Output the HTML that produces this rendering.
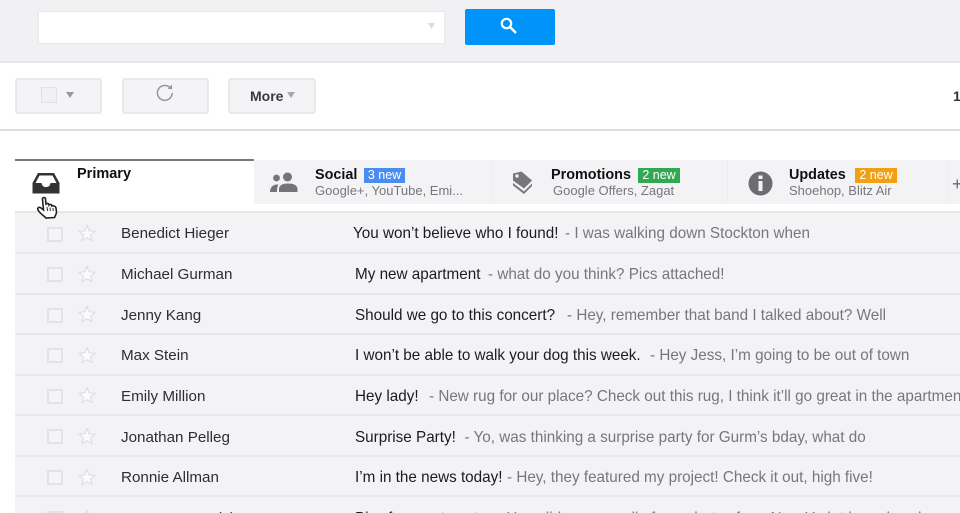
<!DOCTYPE html>
<html><head><meta charset="utf-8">
<style>
html,body{margin:0;padding:0;background:#fff}
#p{position:relative;width:960px;height:513px;overflow:hidden;background:#fff;font-family:"Liberation Sans",sans-serif;filter:blur(.35px)}
#p div,#p svg{position:absolute}
.t{white-space:nowrap;line-height:20px;height:20px}
.btn{background:#f4f4f6;border:2px solid #e9e9eb;border-radius:3px;box-sizing:border-box;top:78px;height:36px;width:87px}
.row{left:15px;width:945px;height:40px;background:#f3f3f6}
.line{left:15px;width:945px;height:2px;background:#e7e7e9}
.cb{left:47px;width:12px;height:11px;border:2px solid #e3e3e5;background:#f5f5f7}
.n{left:121px;font-size:15.2px;color:#2e2e30}
.s{font-size:15.25px;color:#1c1c1e}
.v{font-size:15.25px;color:#77777b}
.tt{font-size:14.4px;font-weight:bold;color:#111;top:165px}
.sub{font-size:13px;color:#77777b;top:181px}
.b{font-size:12.5px;color:#fff;height:15px;line-height:15px;top:168px;text-align:center}
.st{left:78px}
</style></head><body><div id="p">
<div style="left:0;top:0;width:960px;height:62px;background:#f1f1f3"></div>
<div style="left:0;top:61px;width:960px;height:2px;background:#e6e6e8"></div>
<div style="left:38px;top:11px;width:407px;height:33px;background:#fff;border:1px solid #e8e8ea;box-sizing:border-box"></div>
<svg style="left:427px;top:23px" width="9" height="6"><path d="M1 0H8L4.500 6Z" fill="#dcdcde"/></svg>
<div style="left:465px;top:9px;width:90px;height:36px;background:#0094fb;border-radius:2px"></div>
<svg style="left:499px;top:16px" width="20" height="20" viewBox="0 0 20 20"><circle cx="7.500" cy="7.500" r="4.700" fill="none" stroke="#fff" stroke-width="2.200"/><path d="M11 11L17 17" stroke="#fff" stroke-width="2.400"/></svg>

<div class="btn" style="left:15px"></div>
<div style="left:41px;top:87px;width:14px;height:14px;border:1px solid #e2e2e4;background:#f1f1f3"></div>
<svg style="left:66px;top:92px" width="8" height="6"><path d="M0 0H8L4 6Z" fill="#98989c"/></svg>
<div class="btn" style="left:122px"></div>
<svg style="left:154px;top:83px" width="22" height="20" viewBox="0 0 22 20"><path d="M16.500 5.200A7.400 7.400 0 1 0 18.200 10" fill="none" stroke="#97979b" stroke-width="1.500"/><path d="M13.500 5.800L18 6.300V1.500Z" fill="#97979b"/></svg>
<div class="btn" style="left:228px;width:88px"></div>
<div class="t" style="left:250px;top:86px;font-size:14px;font-weight:bold;color:#3a3a3c">More</div>
<svg style="left:287px;top:92px" width="8" height="6"><path d="M0 0H8L4 6Z" fill="#a8a8ac"/></svg>
<div class="t" style="left:953px;top:86px;font-size:14px;font-weight:bold;color:#333">1</div>
<div style="left:0;top:129px;width:960px;height:2px;background:#dedee0"></div>

<div style="left:254px;top:160px;width:706px;height:44px;background:#f3f3f6"></div>
<div style="left:15px;top:159px;width:239px;height:2px;background:#7a7a7c"></div>
<div style="left:491px;top:160px;width:1px;height:44px;background:#eeeef1"></div>
<div style="left:727px;top:160px;width:1px;height:44px;background:#eeeef1"></div>
<div style="left:948px;top:160px;width:1px;height:44px;background:#eeeef1"></div>

<svg style="left:32px;top:172px" width="28" height="22" viewBox="0 0 28 22"><path d="M6 1H22L27.500 11V21.500H.5V11Z" fill="#333335"/><path d="M7.500 3.500H20.500L24.500 11H18.500C18 14 16.500 15 14 15S10 14 9.500 11H3.500Z" fill="#fff"/></svg>
<div class="t" style="left:77px;top:164px;font-size:14.500px;font-weight:bold;color:#111">Primary</div>

<svg style="left:269px;top:172px" width="30" height="22" viewBox="0 0 30 22"><circle cx="7.500" cy="6" r="3.400" fill="#747478"/><circle cx="18.500" cy="5" r="4.500" fill="#747478"/><path d="M1 20C1 15.500 4 12.500 8 12.500H9.500C8.500 14 8 16 8 20Z" fill="#747478"/><path d="M10 20V17C10 13 14 11.500 19 11.500S28.500 13 28.500 17V20Z" fill="#747478"/></svg>
<div class="t tt" style="left:315px">Social</div>
<div class="b" style="left:364px;width:41px;background:#4a8cf0">3 new</div>
<div class="t sub" style="left:315px">Google+, YouTube, Emi...</div>

<svg style="left:512px;top:170px" width="21" height="25" viewBox="0 0 21 25"><path d="M1 3.500L9.500 1.500 20 10.500 12 18.500 1 10.500Z" fill="#77777b"/><circle cx="5" cy="6" r="1.700" fill="#f3f3f6"/><path d="M1 13L12 21.500 20 13.500V16L12 24 1 15.500Z" fill="#77777b"/></svg>
<div class="t tt" style="left:551px">Promotions</div>
<div class="b" style="left:638px;width:42px;background:#33a853">2 new</div>
<div class="t sub" style="left:553px">Google Offers, Zagat</div>

<svg style="left:748px;top:171px" width="25" height="25" viewBox="0 0 25 25"><circle cx="12.500" cy="12.500" r="12" fill="#6d6d71"/><rect x="10.500" y="4.500" width="4" height="3.500" fill="#f3f3f6"/><rect x="10.500" y="10" width="4" height="10" fill="#f3f3f6"/></svg>
<div class="t tt" style="left:789px">Updates</div>
<div class="b" style="left:855px;width:42px;background:#f0a010">2 new</div>
<div class="t sub" style="left:789px">Shoehop, Blitz Air</div>
<div class="t" style="left:952px;top:174px;font-size:18px;color:#6a6a6e">+</div>

<div class="line" style="top:211px"></div>
<div class="row" style="top:213px"></div><div class="line" style="top:252px"></div>
<div class="row" style="top:254px"></div><div class="line" style="top:293px"></div>
<div class="row" style="top:295px"></div><div class="line" style="top:333px"></div>
<div class="row" style="top:335px"></div><div class="line" style="top:374px"></div>
<div class="row" style="top:376px"></div><div class="line" style="top:414px"></div>
<div class="row" style="top:416px"></div><div class="line" style="top:455px"></div>
<div class="row" style="top:457px"></div><div class="line" style="top:495px"></div>
<div class="row" style="top:497px;height:16px"></div>

<div class="cb" style="top:227px"></div><svg class="st" style="top:224px" width="18" height="18" viewBox="0 0 18 18"><path d="M9 1.500L11.200 6.800 17 7.300 12.600 11 14 16.700 9 13.700 4 16.700 5.400 11 1 7.300 6.800 6.800Z" fill="#fafafb" stroke="#dcdcdf"/></svg>
<div class="t n" style="top:224px">Benedict Hieger</div>
<div class="t s" style="left:353px;top:224px">You won’t believe who I found!</div>
<div class="t v" style="left:565px;top:224px">- I was walking down Stockton when</div>

<div class="cb" style="top:267px"></div><svg class="st" style="top:265px" width="18" height="18" viewBox="0 0 18 18"><path d="M9 1.500L11.200 6.800 17 7.300 12.600 11 14 16.700 9 13.700 4 16.700 5.400 11 1 7.300 6.800 6.800Z" fill="#fafafb" stroke="#dcdcdf"/></svg>
<div class="t n" style="top:265px">Michael Gurman</div>
<div class="t s" style="left:355px;top:265px">My new apartment</div>
<div class="t v" style="left:488px;top:265px">- what do you think? Pics attached!</div>

<div class="cb" style="top:308px"></div><svg class="st" style="top:305px" width="18" height="18" viewBox="0 0 18 18"><path d="M9 1.500L11.200 6.800 17 7.300 12.600 11 14 16.700 9 13.700 4 16.700 5.400 11 1 7.300 6.800 6.800Z" fill="#fafafb" stroke="#dcdcdf"/></svg>
<div class="t n" style="top:306px">Jenny Kang</div>
<div class="t s" style="left:355px;top:306px">Should we go to this concert?</div>
<div class="t v" style="left:567px;top:306px">- Hey, remember that band I talked about? Well</div>

<div class="cb" style="top:348px"></div><svg class="st" style="top:346px" width="18" height="18" viewBox="0 0 18 18"><path d="M9 1.500L11.200 6.800 17 7.300 12.600 11 14 16.700 9 13.700 4 16.700 5.400 11 1 7.300 6.800 6.800Z" fill="#fafafb" stroke="#dcdcdf"/></svg>
<div class="t n" style="top:346px">Max Stein</div>
<div class="t s" style="left:355px;top:346px">I won’t be able to walk your dog this week.</div>
<div class="t v" style="left:650px;top:346px">- Hey Jess, I’m going to be out of town</div>

<div class="cb" style="top:389px"></div><svg class="st" style="top:386px" width="18" height="18" viewBox="0 0 18 18"><path d="M9 1.500L11.200 6.800 17 7.300 12.600 11 14 16.700 9 13.700 4 16.700 5.400 11 1 7.300 6.800 6.800Z" fill="#fafafb" stroke="#dcdcdf"/></svg>
<div class="t n" style="top:387px">Emily Million</div>
<div class="t s" style="left:355px;top:387px">Hey lady!</div>
<div class="t v" style="left:429px;top:387px">- New rug for our place? Check out this rug, I think it’ll go great in the apartment</div>

<div class="cb" style="top:429px"></div><svg class="st" style="top:427px" width="18" height="18" viewBox="0 0 18 18"><path d="M9 1.500L11.200 6.800 17 7.300 12.600 11 14 16.700 9 13.700 4 16.700 5.400 11 1 7.300 6.800 6.800Z" fill="#fafafb" stroke="#dcdcdf"/></svg>
<div class="t n" style="top:428px">Jonathan Pelleg</div>
<div class="t s" style="left:355px;top:428px">Surprise Party!</div>
<div class="t v" style="left:464.500px;top:428px">- Yo, was thinking a surprise party for Gurm’s bday, what do</div>

<div class="cb" style="top:470px"></div><svg class="st" style="top:468px" width="18" height="18" viewBox="0 0 18 18"><path d="M9 1.500L11.200 6.800 17 7.300 12.600 11 14 16.700 9 13.700 4 16.700 5.400 11 1 7.300 6.800 6.800Z" fill="#fafafb" stroke="#dcdcdf"/></svg>
<div class="t n" style="top:468px">Ronnie Allman</div>
<div class="t s" style="left:355px;top:468px">I’m in the news today!</div>
<div class="t v" style="left:507px;top:468px">- Hey, they featured my project! Check it out, high five!</div>

<div class="cb" style="top:511px"></div><svg class="st" style="top:509px" width="18" height="18" viewBox="0 0 18 18"><path d="M9 1.500L11.200 6.800 17 7.300 12.600 11 14 16.700 9 13.700 4 16.700 5.400 11 1 7.300 6.800 6.800Z" fill="#fafafb" stroke="#dcdcdf"/></svg>
<div class="t n" style="top:509px;left:155px">Ian Hunt (2)</div>
<div class="t s" style="left:355px;top:509px">Pics for apartment</div>
<div class="t v" style="left:497px;top:509px">- Hey, did you see all of our photos from New York trip and such</div>

<svg style="left:36px;top:196px" width="22" height="24" viewBox="0 0 22 24"><path d="M6.500 3C6.500 1 9.500 1 9.500 3L10 8C11 7 13 7.500 13 9 14 8 16 8.500 16 10 17 9.500 19.500 10 20 12L20.500 16C20.500 18 19.500 19 18.500 21.500L10 22C7 19 4 17.500 2 14 1 12 3 10.500 5 12L7.500 14Z" fill="#fff" stroke="#222" stroke-width="1.600"/><path d="M11 11L11.500 15M14 11.500L14.300 15M17 12L17.200 15" stroke="#222" stroke-width="1"/></svg>
</div></body></html>
